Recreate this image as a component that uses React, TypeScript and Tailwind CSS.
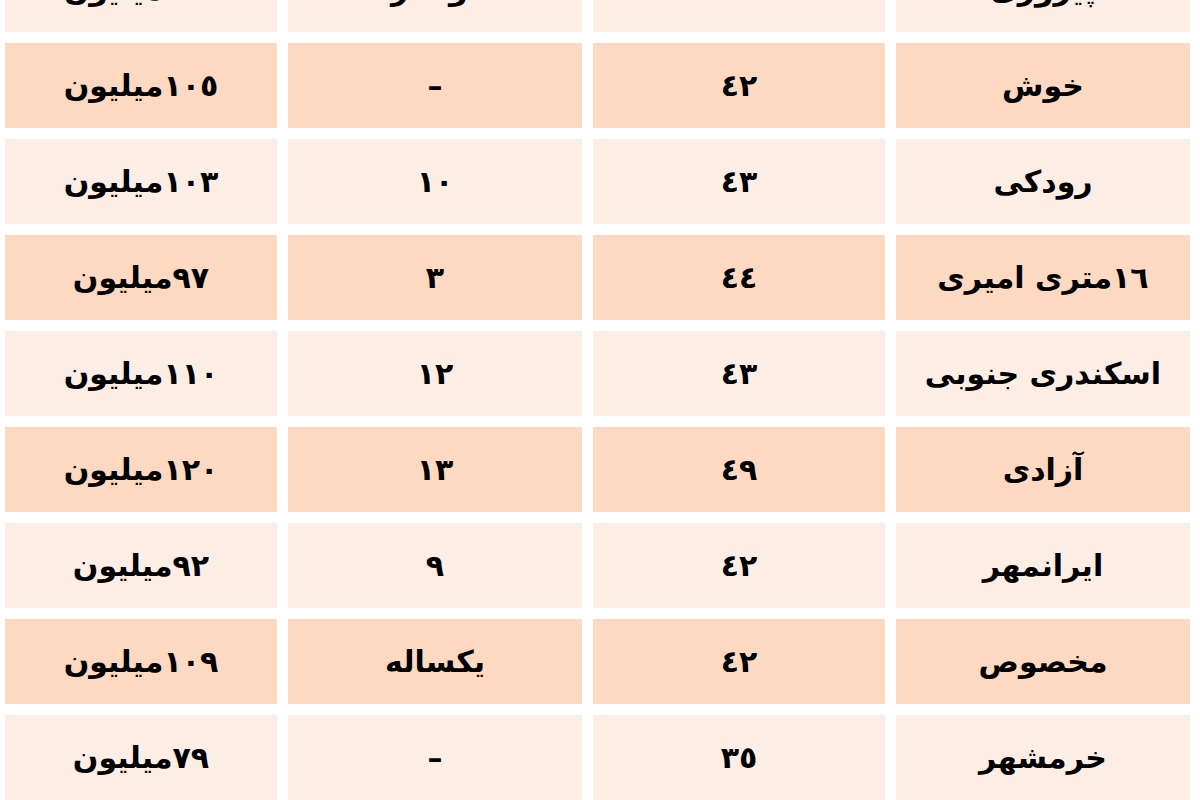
const rows = [
  { price: "١١٥میلیون", age: "نوساز", area: "٤٥", street: "پیروزی", dark: false },
  { price: "١٠٥میلیون", age: "–", area: "٤٢", street: "خوش", dark: true },
  { price: "١٠٣میلیون", age: "١٠", area: "٤٣", street: "رودکی", dark: false },
  { price: "٩٧میلیون", age: "٣", area: "٤٤", street: "١٦متری امیری", dark: true },
  { price: "١١٠میلیون", age: "١٢", area: "٤٣", street: "اسکندری جنوبی", dark: false },
  { price: "١٢٠میلیون", age: "١٣", area: "٤٩", street: "آزادی", dark: true },
  { price: "٩٢میلیون", age: "٩", area: "٤٢", street: "ایرانمهر", dark: false },
  { price: "١٠٩میلیون", age: "یکساله", area: "٤٢", street: "مخصوص", dark: true },
  { price: "٧٩میلیون", age: "–", area: "٣٥", street: "خرمشهر", dark: false },
];

const Cell = ({ text, dark }: { text: string; dark: boolean }) => (
  <div
    dir="rtl"
    className={`h-[85px] flex items-center justify-center text-[30px] font-bold text-black ${
      dark ? "bg-[#fdd9c2]" : "bg-[#fdeee5]"
    }`}
  >
    {text}
  </div>
);

export default function App() {
  return (
    <div
      className="w-[1200px] h-[800px] overflow-hidden bg-white"
      style={{ fontFamily: '"DejaVu Sans", "Noto Sans", sans-serif' }}
    >
      <div className="-mt-[53px] pl-[5px] grid grid-cols-[272px_294px_292px_294px] gap-x-[11px] gap-y-[11px]">
        {rows.map((r, i) => (
          <div key={i} className="contents">
            <Cell text={r.price} dark={r.dark} />
            <Cell text={r.age} dark={r.dark} />
            <Cell text={r.area} dark={r.dark} />
            <Cell text={r.street} dark={r.dark} />
          </div>
        ))}
      </div>
    </div>
  );
}
